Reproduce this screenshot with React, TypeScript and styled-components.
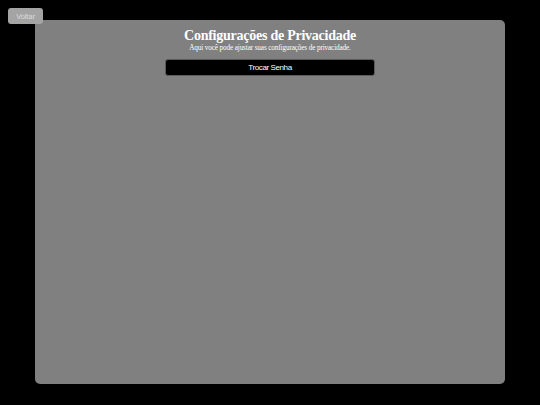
import React from "react";
import styled, { createGlobalStyle } from "styled-components";

const Global = createGlobalStyle`
  html, body { margin: 0; padding: 0; background: #000; }
  body { width: 540px; height: 405px; overflow: hidden; font-family: "Liberation Serif", serif; }
`;

const Page = styled.div`
  position: relative;
  width: 540px;
  height: 405px;
  background: #000;
  display: flex;
  justify-content: center;
  padding-top: 20px;
  box-sizing: border-box;
`;

const BackButton = styled.button`
  position: absolute;
  top: 8px;
  left: 8px;
  width: 35px;
  height: 16px;
  padding: 0;
  border: none;
  border-radius: 3px;
  background: #a4a4a4;
  color: #dcdcdc;
  font-family: "Liberation Sans", Arial, sans-serif;
  font-size: 7.5px;
  letter-spacing: -0.1px;
  cursor: pointer;
  z-index: 1;
`;

const Panel = styled.main`
  width: 470px;
  height: 364px;
  background: #808080;
  border-radius: 5px;
  display: flex;
  flex-direction: column;
  align-items: center;
  padding-top: 8px;
  box-sizing: border-box;
`;

const Title = styled.h1`
  margin: 0;
  font-family: "Liberation Serif", "Times New Roman", serif;
  font-weight: bold;
  font-size: 14px;
  line-height: 16px;
  letter-spacing: -0.25px;
  color: #fff;
`;

const Subtitle = styled.p`
  margin: 0;
  font-family: "Liberation Serif", "Times New Roman", serif;
  font-size: 7.2px;
  line-height: 8px;
  letter-spacing: -0.12px;
  color: #fff;
`;

const ActionButton = styled.button`
  margin-top: 7px;
  width: 210px;
  height: 16.5px;
  box-sizing: border-box;
  padding: 0;
  background: #000;
  color: #fff;
  border: 1px solid #5a5a5a;
  border-radius: 3px;
  font-family: "Liberation Sans", Arial, sans-serif;
  font-size: 8px;
  letter-spacing: -0.4px;
  cursor: pointer;
`;

export default function App() {
  return (
    <>
      <Global />
      <Page>
        <BackButton>Voltar</BackButton>
        <Panel>
          <Title>Configurações de Privacidade</Title>
          <Subtitle>Aqui você pode ajustar suas configurações de privacidade.</Subtitle>
          <ActionButton>Trocar Senha</ActionButton>
        </Panel>
      </Page>
    </>
  );
}
